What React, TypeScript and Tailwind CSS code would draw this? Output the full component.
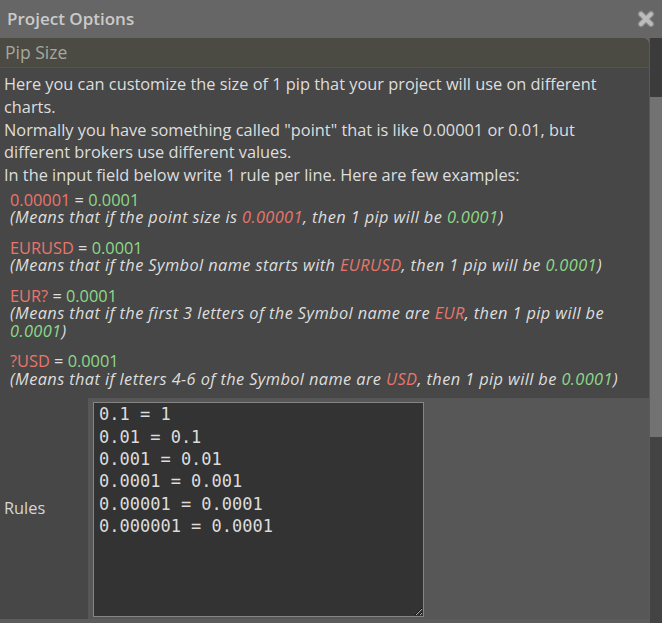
const examples = [
  {
    rule: "0.00001",
    note: (
      <>
        (Means that if the point size is <R>0.00001</R>, then 1 pip will be <G>0.0001</G>)
      </>
    ),
  },
  {
    rule: "EURUSD",
    note: (
      <>
        (Means that if the Symbol name starts with <R>EURUSD</R>, then 1 pip will be <G>0.0001</G>)
      </>
    ),
  },
  {
    rule: "EUR?",
    note: (
      <>
        (Means that if the first 3 letters of the Symbol name are <R>EUR</R>, then 1 pip will be <G>0.0001</G>)
      </>
    ),
  },
  {
    rule: "?USD",
    note: (
      <>
        (Means that if letters 4-6 of the Symbol name are <R>USD</R>, then 1 pip will be <G>0.0001</G>)
      </>
    ),
  },
];

function R({ children }: { children: React.ReactNode }) {
  return <span className="text-[#e8766c]">{children}</span>;
}

function G({ children }: { children: React.ReactNode }) {
  return <span className="text-[#8ed98a]">{children}</span>;
}

const rules = [
  "0.1 = 1",
  "0.01 = 0.1",
  "0.001 = 0.01",
  "0.0001 = 0.001",
  "0.00001 = 0.0001",
  "0.000001 = 0.0001",
].join("\n");

function CloseIcon() {
  return (
    <svg width="20" height="20" viewBox="0 0 20 20">
      <g strokeLinecap="round">
        <path d="M5 5 L15 15 M15 5 L5 15" stroke="#858585" strokeWidth="6.4" />
        <path d="M5 5 L15 15 M15 5 L5 15" stroke="#bcbcbc" strokeWidth="4" />
      </g>
    </svg>
  );
}

export default function App() {
  return (
    <div className="flex h-[623px] w-[662px] flex-col overflow-hidden bg-[#666666] font-['Open_Sans',sans-serif]">
      {/* title bar */}
      <div className="flex h-[38px] shrink-0 items-center justify-between pl-[7px] pr-[6px]">
        <span className="text-[17px] font-semibold text-[#cacaca]">Project Options</span>
        <CloseIcon />
      </div>

      <div className="flex min-h-0 flex-1">
        <div className="flex w-[649px] flex-col">
          <div className="flex h-[30px] shrink-0 items-center rounded-tr-[6px] border-b border-[#55554d] bg-[#4b4b43] pl-[5px] text-[17.5px] text-[#a7a7a0]">
            Pip Size
          </div>

          <div className="bg-[#474747] px-[4px] pb-[10px] pt-[5px] text-[16.35px] text-[#dedede]">
            <p className="leading-[22.75px]">
              Here you can customize the size of 1 pip that your project will use on different charts.
              <br />
              Normally you have something called "point" that is like 0.00001 or 0.01, but different brokers use
              different values.
              <br />
              In the input field below write 1 rule per line. Here are few examples:
            </p>
            <div className="mt-[5px] flex flex-col gap-[13px] pl-[6px] leading-[17.5px]">
              {examples.map((ex) => (
                <div key={ex.rule}>
                  <div>
                    <R>{ex.rule}</R> = <G>0.0001</G>
                  </div>
                  <div className="italic tracking-[0.4px]">{ex.note}</div>
                </div>
              ))}
            </div>
          </div>

          <div className="grid flex-1 grid-cols-[88px_1fr]">
            <div className="flex items-center bg-[#474747] pl-[4px] text-[16.35px] text-[#d6d6d6]">Rules</div>
            <div className="bg-[#575757] px-[5px] pb-[2px] pt-[4px]">
              <textarea
                defaultValue={rules}
                spellCheck={false}
                className="block h-[215px] w-[331px] resize border border-[#858585] bg-[#333333] px-[5px] pt-0 font-['DejaVu_Sans_Mono',monospace] text-[17px] leading-[22.4px] text-[#dcdcdc] outline-none"
              />
            </div>
          </div>
          <div className="h-[4px] shrink-0 bg-[#5c5c5c]" />
        </div>

        {/* scrollbar */}
        <div className="flex w-[13px] flex-col border-l border-[#5a5a5a] bg-[#404040]">
          <div className="h-[59px] bg-[#3b3b3b]" />
          <div className="h-[340px] bg-[#727272]" />
          <div className="flex-1 bg-[#434343]" />
        </div>
      </div>
    </div>
  );
}
